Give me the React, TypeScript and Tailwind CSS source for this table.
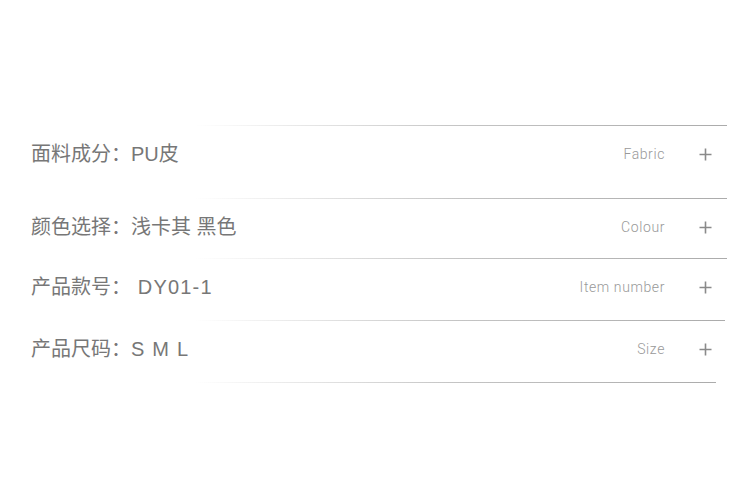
import React from "react";

const rows = [
  { label: "面料成分：", value: "PU皮", track: "tracking-[0px]", en: "Fabric", after: "h-[16px]" },
  { label: "颜色选择：", value: "浅卡其 黑色", track: "tracking-[0px]", en: "Colour", after: "h-[3px]" },
  { label: "产品款号：", value: " DY01-1", track: "tracking-[1.2px]", en: "Item number", after: "h-[5px]" },
  { label: "产品尺码：", value: "S M L", track: "tracking-[1.2px]", en: "Size", after: "h-[5px]" },
];

function Line({ end }: { end: string }) {
  return (
    <div
      className={`h-px ml-[195px] ${end} bg-gradient-to-r from-[rgba(200,200,200,0)] via-[#c4c4c4] to-[#ababab]`}
    />
  );
}

function Plus() {
  return (
    <svg width="13" height="13" viewBox="0 0 13 13" className="block">
      <path d="M6.5 0.5v12M0.5 6.5h12" stroke="#8a8a8a" strokeWidth="1.6" fill="none" />
    </svg>
  );
}

export default function App() {
  return (
    <div className="w-[750px] h-[487px] bg-white pt-[125px]">
      {rows.map((r, i) => (
        <div key={i}>
          <Line end={i < 3 ? "w-[532px]" : "w-[530px]"} />
          <div className="h-[56px] flex items-center pl-[31px] pr-[38px]">
            <div
              className="text-[20px] text-[#777777] whitespace-pre"
              style={{ fontFamily: '"Liberation Sans", "Noto Sans CJK SC", sans-serif' }}
            >
              <span>{r.label}</span>
              <span className={r.track}>{r.value}</span>
            </div>
            <div
              className="ml-auto text-[14px] font-light text-[#999999] tracking-[0.6px] mr-[34px]"
              style={{ fontFamily: 'Roboto, "Liberation Sans", sans-serif' }}
            >
              {r.en}
            </div>
            <Plus />
          </div>
          <div className={r.after} />
        </div>
      ))}
      <Line end="w-[521px]" />
    </div>
  );
}
